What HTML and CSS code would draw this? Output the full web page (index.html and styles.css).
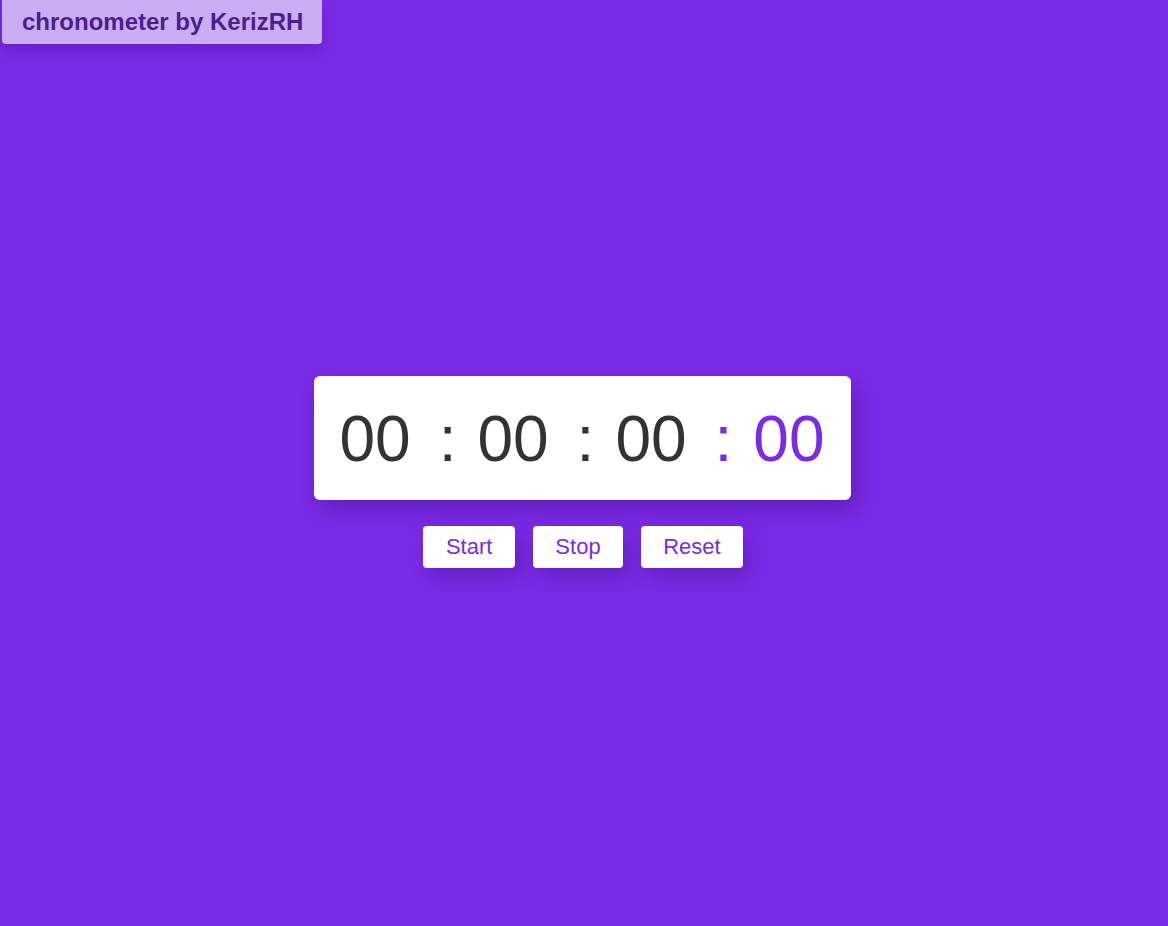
FILE: index.html
```html
<!DOCTYPE html>
<html lang="en">
<head>
<meta charset="utf-8">
<title>chronometer by KerizRH</title>
<link rel="stylesheet" href="styles.css">
</head>
<body>
  <header class="badge">chronometer by KerizRH</header>
  <main class="main">
    <div class="clock">
      <span class="num">00</span><span class="sep">:</span>
      <span class="num">00</span><span class="sep">:</span>
      <span class="num">00</span><span class="sep accent">:</span>
      <span class="num accent">00</span>
    </div>
    <div class="controls">
      <button class="btn btn-start">Start</button>
      <button class="btn btn-stop">Stop</button>
      <button class="btn">Reset</button>
    </div>
  </main>
</body>
</html>
```
FILE: styles.css
```css
* { box-sizing: border-box; }
html, body { height: 100%; }
body {
  margin: 0;
  background: #7b2ae6;
  font-family: "Liberation Sans", Arial, sans-serif;
  display: flex;
  flex-direction: column;
  min-height: 100vh;
}
.badge {
  align-self: flex-start;
  margin-left: 2px;
  padding: 8px 19px 8px 20px;
  background: #c9aef3;
  color: #4c1d8f;
  font-weight: bold;
  font-size: 24px;
  line-height: 28px;
  border-radius: 0 0 4px 4px;
  box-shadow: 0 6px 16px rgba(40, 0, 90, 0.25);
}
.main {
  flex: 1;
  display: flex;
  flex-direction: column;
  align-items: center;
  justify-content: center;
  padding-bottom: 26px;
}
.clock {
  display: flex;
  align-items: center;
  background: #fff;
  border-radius: 6px;
  padding: 26px 26px 24px 25px;
  font-size: 64px;
  line-height: 74px;
  color: #333;
  box-shadow: 6px 10px 22px rgba(40, 0, 90, 0.3);
  margin-left: -3px;
}
.sep {
  margin: 0 21px 0 28px;
}
.accent { color: #7b2ae6; }
.controls {
  display: flex;
  gap: 18px;
  margin-top: 26px;
  padding-right: 2px;
}
.btn {
  font-family: "Liberation Sans", Arial, sans-serif;
  font-size: 22px;
  line-height: 26px;
  padding: 8px 22px;
  border: none;
  background: #fff;
  color: #7b2ae6;
  border-radius: 4px;
  box-shadow: 6px 10px 20px rgba(40, 0, 90, 0.25);
  cursor: pointer;
}
.btn-start {
  padding-left: 22.5px;
  padding-right: 22.5px;
}
.btn-stop {
  padding-left: 22.5px;
  padding-right: 22.5px;
}
```
